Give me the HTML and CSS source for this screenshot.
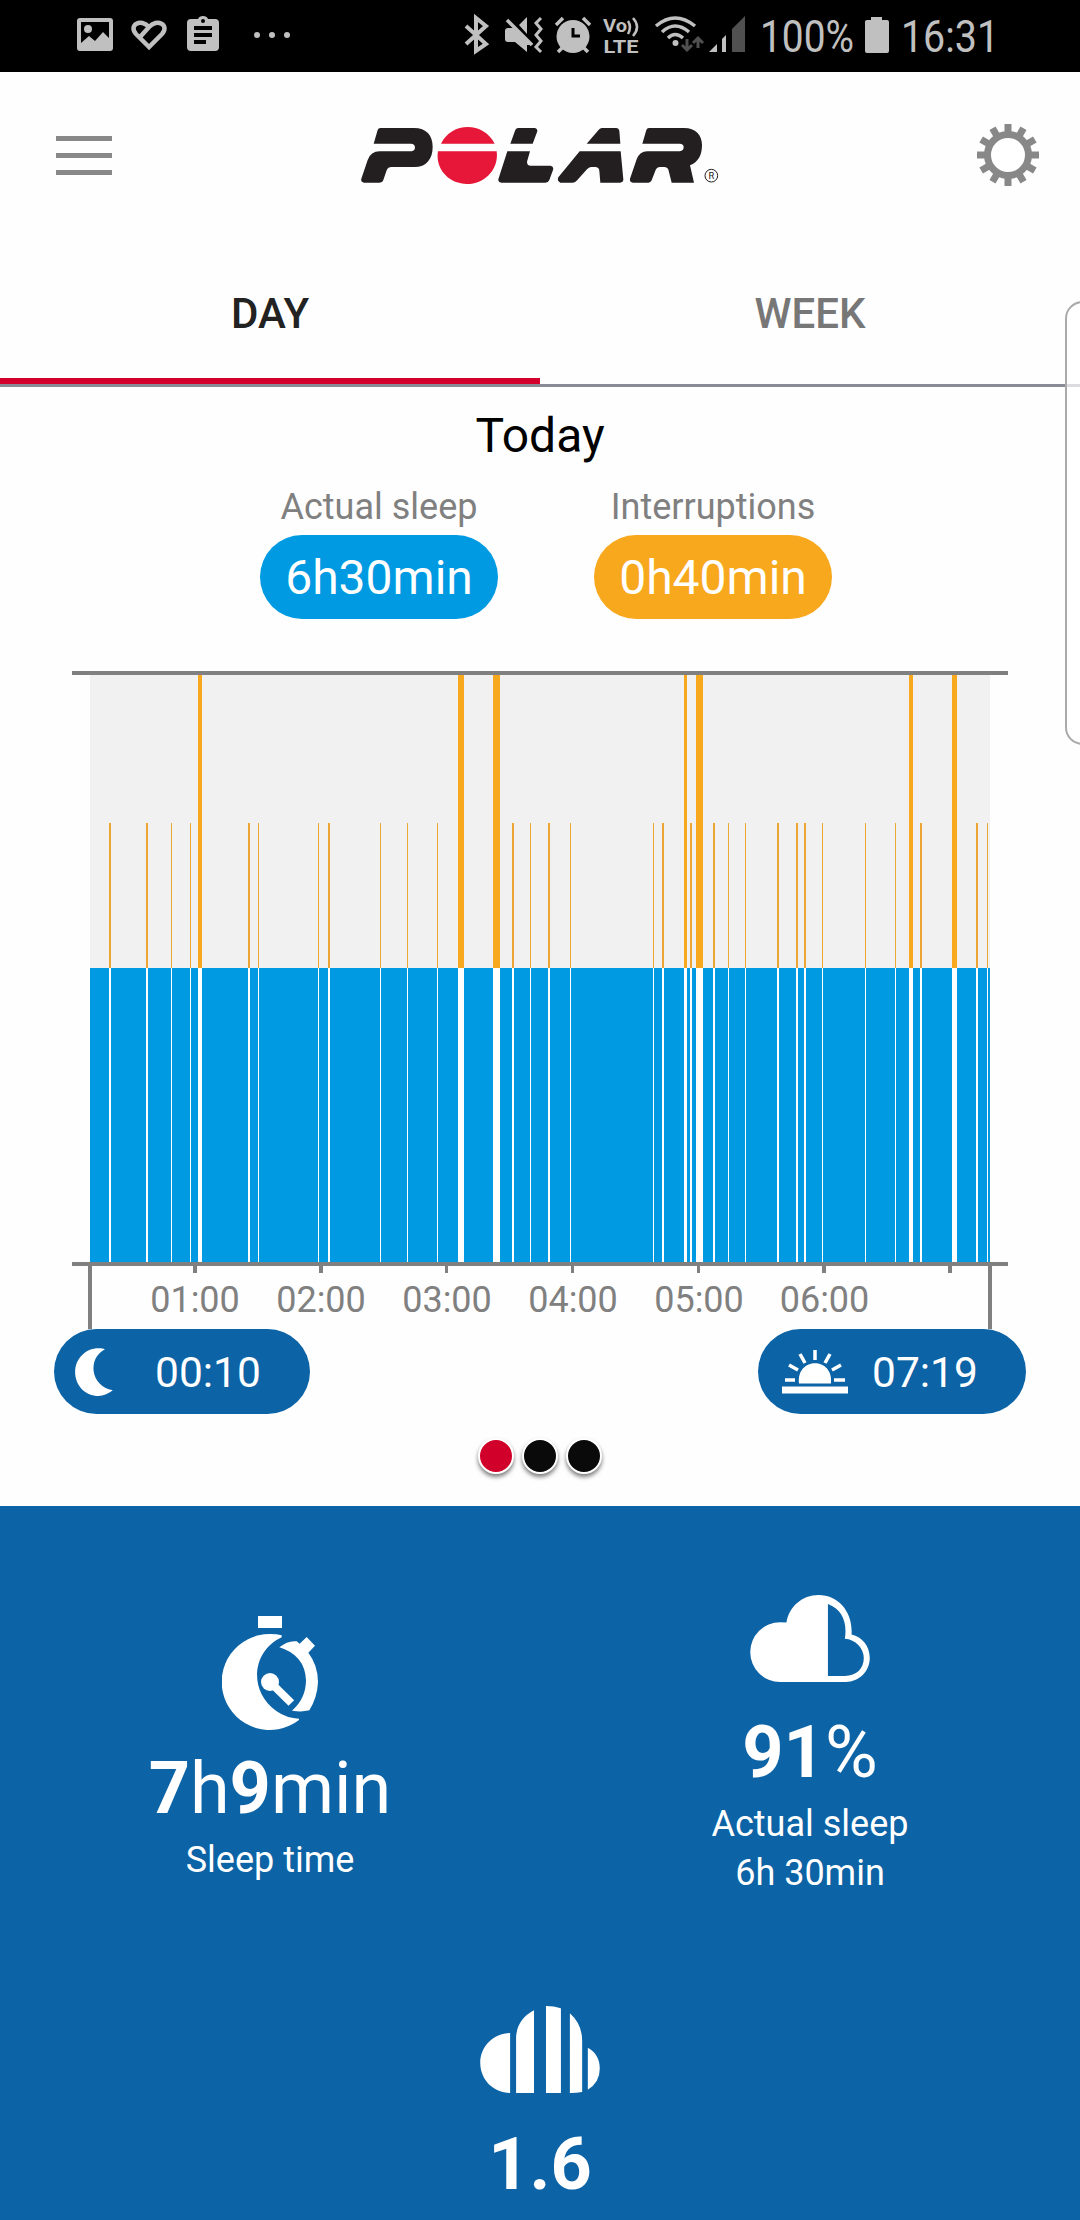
FILE: index.html
```html
<!DOCTYPE html>
<html lang="en">
<head>
  <meta charset="UTF-8">
  <meta name="viewport" content="width=device-width, initial-scale=1.0">
  <title>Polar - Sleep</title>
  <link rel="stylesheet" href="styles.css">
</head>
<body>
  <div class="status-bar">
    <svg class="status-left" viewBox="77 0 216 72" width="216" height="72" fill="#c0c0c0">
      <path fill-rule="evenodd" d="M80 18H110Q113 18 113 21V48Q113 51 110 51H80Q77 51 77 48V21Q77 18 80 18ZM81 22V43L89 36L95 41L103 32L109 38V22Z"/>
      <circle cx="88" cy="29" r="4"/>
      <path d="M149 47L136 34C128 25 141 18 149 27C157 18 170 25 162 34ZM150 26L140 37" fill="none" stroke="#c0c0c0" stroke-width="4.500"/>
      <path fill-rule="evenodd" d="M191 19H198C199 15 207 15 208 19H215Q219 19 219 23V47Q219 51 215 51H191Q187 51 187 47V23Q187 19 191 19ZM203 19A2 2 0 1 0 203 23A2 2 0 1 0 203 19ZM194 26V30H212V26ZM194 33V37H212V33ZM194 40V44H206V40Z"/>
      <circle cx="257" cy="35" r="3"/>
      <circle cx="272" cy="35" r="3"/>
      <circle cx="287" cy="35" r="3"/>
    </svg>
    <svg class="status-right" viewBox="464 0 540 72" width="540" height="72" fill="#c0c0c0">
      <!-- bluetooth -->
      <path d="M466 26L486 44L476 51V18L486 26L466 44" fill="none" stroke="#c0c0c0" stroke-width="4"/>
      <!-- muted / vibrate -->
      <path d="M508 28H513L533 45L527 45V52L515 42H508Q505 42 505 39V31Q505 28 508 28ZM519 25L527 17V34Z"/>
      <path d="M507 20L532 45" fill="none" stroke="#c0c0c0" stroke-width="3.5"/>
      <path d="M541 18L536 23L541 29L536 35L541 41L536 47L541 52" fill="none" stroke="#c0c0c0" stroke-width="3"/>
      <!-- alarm -->
      <circle cx="573" cy="36.500" r="16.500"/>
      <path d="M556 25L563 18M590 25L583 18M562 48L558 52M584 48L588 52" stroke="#c0c0c0" stroke-width="3.500"/>
      <path d="M573 28V36H580" fill="none" stroke="#000" stroke-width="3"/>
      <!-- volte -->
      <text class="volte" x="603" y="32" textLength="24" lengthAdjust="spacingAndGlyphs">Vo</text>
      <text class="volte" x="603.500" y="52.500" textLength="35" lengthAdjust="spacingAndGlyphs">LTE</text>
      <path d="M628 21Q632 27 628 34M633 18Q641 27 633 36" fill="none" stroke="#c0c0c0" stroke-width="2.500"/>
      <!-- wifi -->
      <circle cx="675.500" cy="43" r="3"/>
      <path d="M656 26Q675 10 695 26M662 32Q675 20 689 32M668 38Q675 31 683 38" fill="none" stroke="#c0c0c0" stroke-width="3.500"/>
      <path d="M687 39V50M682 45L687 50L692 45M698 48V37M693 43L698 38L703 43" fill="none" stroke="#505050" stroke-width="3"/>
      <!-- signal -->
      <path d="M709 52L717 44V52ZM722 39L726 35V52H722Z"/>
      <path d="M732 29L745 16V52H732Z" fill="#505050"/>
      <text class="status-text" x="760" y="52" textLength="94" lengthAdjust="spacingAndGlyphs">100%</text>
      <path d="M871 20V17H882V20H887Q889 20 889 22V51Q889 53 887 53H867Q865 53 865 51V22Q865 20 867 20Z"/>
      <text class="status-text" x="901" y="52" textLength="98" lengthAdjust="spacingAndGlyphs">16:31</text>
    </svg>
  </div>

  <header class="header">
    <div class="menu-icon">
      <span></span>
      <span></span>
      <span></span>
    </div>
    <svg class="logo" viewBox="66 78 1074 174" width="358" height="58" fill="#231f20">
      <path d="M124 84H225C262 84 281 106 281 140C281 177 262 201 226 201H158Q147 201 143 211L133 240Q130 248 120 248H75Q64 246 67 236L86 180Q95 154 122 154H218Q228 152 228 142Q227 131 216 131H104L116 90Q118 84 124 84Z"/>
      <path d="M306 131C338 64 434 64 467 131ZM297 154H473C480 205 440 252 384 252C328 252 288 205 297 154Z" fill="#e61738"/>
      <path d="M537 84H588Q596 86 595 94L581 131H514L528 92Q530 84 537 84ZM505 154H573L564 185Q564 197 575 197H635Q645 199 642 210L631 240Q628 248 619 248H487Q477 247 478 238Z"/>
      <path d="M788 84H832Q840 85 841 92L844 131H743L778 91Q782 85 788 84ZM722 154H845L853 238Q853 248 843 248H784L781 212Q780 201 768 201H757Q751 201 744 208L713 242Q708 248 700 248H664Q653 243 658 232Z"/>
      <path d="M930 84H1035C1070 84 1089 105 1089 135C1089 165 1078 186 1053 196L1065 248H998L989 212Q987 201 975 201H963Q953 201 949 212L938 241Q935 248 928 248H882Q871 246 873 236L893 178Q902 154 925 154H1022Q1034 152 1034 142Q1034 131 1022 131H910L922 90Q924 84 930 84Z"/>
      <circle cx="1117" cy="227" r="19" fill="none" stroke="#231f20" stroke-width="3"/>
      <text class="logo-mark" x="1117" y="237">R</text>
    </svg>
    <svg class="gear-icon" viewBox="-31 -31 62 62" width="62" height="62">
      <g stroke="#888" stroke-width="7">
        <path d="M0-31V31"/>
        <path d="M0-31V31" transform="rotate(30)"/>
        <path d="M0-31V31" transform="rotate(60)"/>
        <path d="M0-31V31" transform="rotate(90)"/>
        <path d="M0-31V31" transform="rotate(120)"/>
        <path d="M0-31V31" transform="rotate(150)"/>
      </g>
      <circle r="20.500" fill="#fff" stroke="#888" stroke-width="7"/>
    </svg>
  </header>

  <nav class="tabs">
    <div class="tab active">DAY</div>
    <div class="tab">WEEK</div>
  </nav>
  <div class="edge-panel"></div>

  <main class="day">
    <h1 class="day-title">Today</h1>
    <div class="summary">
      <div class="summary-item">
        <span class="summary-label">Actual sleep</span>
        <span class="pill sleep">6h30min</span>
      </div>
      <div class="summary-item">
        <span class="summary-label">Interruptions</span>
        <span class="pill interruptions">0h40min</span>
      </div>
    </div>

    <svg class="chart" viewBox="72 671 936 658" width="936" height="658" shape-rendering="crispEdges">
      <rect x="90" y="675" width="900" height="293" fill="#f1f1f1"/>
      <rect x="90" y="968" width="900" height="294" fill="#009ae2"/>
      <g id="bars"></g>
      <path fill="#808080" d="M72 671H1008V675H72ZM72 1262H1008V1266H72ZM88 1266H92V1329H88ZM988 1266H992V1329H988Z"/>
      <path fill="#808080" d="M193 1266h4v7h-4zM319 1266h4v7h-4zM445 1266h3v7h-3zM571 1266h3v7h-3zM697 1266h3v7h-3zM822 1266h4v7h-4zM948 1266h4v7h-4z"/>
      <g class="axis-labels">
        <text x="195" y="1312">01:00</text>
        <text x="321" y="1312">02:00</text>
        <text x="447" y="1312">03:00</text>
        <text x="573" y="1312">04:00</text>
        <text x="699" y="1312">05:00</text>
        <text x="824.500" y="1312">06:00</text>
      </g>
    </svg>

    <div class="times">
      <div class="time-pill start">
        <svg viewBox="105 323 114 145" width="38" height="48" fill="#fff">
          <path d="M195 327C142 354 150 438 219 451C203 463 190 468 176 468C136 468 105 436 105 396C105 356 136 324 176 324C184 324 190 325 195 327Z"/>
        </svg>
        <span>00:10</span>
      </div>
      <div class="time-pill end">
        <svg viewBox="782 1351 66 44" width="66" height="44" fill="#fff">
          <path d="M782 1387.500H848V1394.500H782ZM799 1384.500C796 1357.500 834 1357.500 831 1384.500Z"/>
          <path d="M785 1381H795M834 1381H845M789 1366L798 1371M841 1366L832 1371M800 1355L805 1364M830 1355L825 1364M815 1351V1361" stroke="#fff" stroke-width="3.500"/>
        </svg>
        <span>07:19</span>
      </div>
    </div>

    <div class="dots">
      <span class="dot active"></span>
      <span class="dot"></span>
      <span class="dot"></span>
    </div>
  </main>

  <section class="stats">
    <div class="stat sleep-time">
      <svg viewBox="276 78 288 342" width="96" height="114" fill="#fff">
        <path d="M384 78H456V114H384Z"/>
        <path d="M455 136V142C370 180 350 300 440 364Q472 386 507 386V390A144 144 0 1 1 420 132Q440 132 455 136Z"/>
        <path d="M448 172Q475 150 500 154L509 161L530 141L555 167L535 188Q564 226 564 276Q562 322 538 361Q515 367 486 362Q528 325 528 270Q524 195 448 172Z"/>
        <circle cx="420" cy="276" r="27"/>
        <path d="M420 276L484 339" stroke="#fff" stroke-width="24"/>
      </svg>
      <div class="stat-value"><b>7</b>h<b>9</b>min</div>
      <div class="stat-label">Sleep time</div>
    </div>
    <div class="stat actual-sleep">
      <svg viewBox="180 74 360 262" width="120" height="87" fill="#fff">
        <path fill-rule="evenodd" d="M270 336A90 90 0 0 1 270 156Q280 156 289 157C296 110 336 74 386 74C446 74 490 126 485 193C518 200 540 229 540 264C540 304 508 336 468 336ZM414 101V318H465C500 318 522 296 522 264C522 234 497 208 465 206C473 155 456 117 414 101Z"/>
      </svg>
      <div class="stat-value"><b>91</b>%</div>
      <div class="stat-label">Actual sleep<br>6h 30min</div>
    </div>
    <div class="stat continuity">
      <svg viewBox="90 80 360 262" width="120" height="87" fill="#fff">
        <path d="M180 161V342C130 342 90 302 90 251C90 202 130 161 180 161ZM198 342V175Q200 120 252 93V342ZM288 80Q312 80 333 87V342H288ZM360 102Q397 135 397 185V339Q380 342 360 342ZM414 206Q450 226 450 269Q450 310 414 332Z"/>
      </svg>
      <div class="stat-value"><b>1.6</b></div>
    </div>
  </section>

  <script>
    // Interruptions: [x, width], long ones take the full height
    const shortBars = [
      [109, 2], [146, 2], [171, 1], [190, 1], [248, 2], [258, 1], [318, 1], [328, 2],
      [380, 1], [407, 1], [437, 1], [512, 2], [530, 1], [548, 2], [570, 1], [653, 1],
      [662, 2], [690, 2], [713, 2], [728, 1], [745, 1], [777, 2], [796, 2], [804, 2],
      [822, 1], [865, 1], [895, 1], [920, 2], [976, 2], [987, 1]
    ];
    const longBars = [[198, 4], [458, 6], [493, 7], [684, 3], [696, 7], [909, 4], [952, 5]];
    const bars = document.getElementById('bars');

    function addRect(x, y, width, height, fill) {
      const rect = document.createElementNS('http://www.w3.org/2000/svg', 'rect');
      rect.setAttribute('x', x);
      rect.setAttribute('y', y);
      rect.setAttribute('width', width);
      rect.setAttribute('height', height);
      rect.setAttribute('fill', fill);
      bars.appendChild(rect);
    }

    function drawBars(list, top, color) {
      list.forEach(([x, width]) => {
        addRect(x, top, width, 968 - top, color);
        addRect(x, 968, width, 294, '#ffffff');
      });
    }

    drawBars(shortBars, 823, '#eba633');
    drawBars(longBars, 675, '#f8a81c');
  </script>
</body>
</html>
```

FILE: styles.css
```css
* {
  box-sizing: border-box;
}

body {
  width: 1080px;
  height: 2220px;
  margin: 0;
  position: relative;
  overflow: hidden;
  background-color: #fefefe;
  color: #000;
  font-family: Roboto, sans-serif;
}

svg {
  display: block;
  flex-shrink: 0;
}

.status-bar {
  height: 72px;
  padding: 0 76px 0 77px;
  background-color: #000;
  display: flex;
  justify-content: space-between;
}

.status-text {
  font-size: 45px;
}

.volte {
  font-size: 19px;
  font-weight: 700;
}

.header {
  height: 166px;
  padding: 0 41px 0 56px;
  display: flex;
  align-items: center;
  justify-content: space-between;
}

.menu-icon {
  width: 56px;
  height: 39px;
  display: flex;
  flex-direction: column;
  justify-content: space-between;
}

.menu-icon span {
  height: 5px;
  background-color: #888;
}

.logo {
  margin-left: -9px;
}

.logo-mark {
  font-size: 28px;
  text-anchor: middle;
}

.tabs {
  height: 149px;
  display: flex;
  border-bottom: 3px solid #8a8a94;
}

.tab {
  flex: 1;
  padding-top: 52px;
  line-height: 48px;
  font-size: 42px;
  font-weight: 500;
  text-align: center;
  color: #777;
}

.tab.active {
  color: #222;
  border-bottom: 6px solid #d3002b;
}

/* handle of the phone's edge panel, over the page */
.edge-panel {
  position: absolute;
  top: 301px;
  right: -20px;
  width: 35px;
  height: 444px;
  border: 2px solid #aaa;
  border-radius: 20px;
  background-color: rgba(255, 255, 255, 0.7);
}

.day {
  height: 1119px;
  padding-top: 21px;
  display: flex;
  flex-direction: column;
  align-items: center;
}

.day-title {
  margin: 0;
  font-size: 48px;
  line-height: 56px;
  font-weight: 400;
}

.summary {
  width: 572px;
  margin: 22px 0 52px 12px;
  display: flex;
  justify-content: space-between;
}

.summary-item {
  width: 238px;
  display: flex;
  flex-direction: column;
  text-align: center;
}

.summary-label {
  margin-bottom: 7px;
  font-size: 36px;
  line-height: 42px;
  color: #808080;
}

.pill {
  height: 84px;
  border-radius: 42px;
  font-size: 48px;
  line-height: 86px;
  color: #fff;
}

.pill.sleep {
  background-color: #009ae2;
}

.pill.interruptions {
  background-color: #f8a81c;
}

.axis-labels {
  font-size: 36px;
  fill: #808080;
  text-anchor: middle;
}

.times {
  width: 972px;
  display: flex;
  justify-content: space-between;
}

.time-pill {
  height: 85px;
  border-radius: 43px;
  background-color: #0c63a6;
  color: #fff;
  font-size: 42.5px;
  display: flex;
  align-items: center;
}

.time-pill span {
  padding-top: 2px;
}

.time-pill.start {
  width: 256px;
  padding-left: 21px;
  gap: 42px;
}

.time-pill.end {
  width: 268px;
  padding-left: 24px;
  gap: 24px;
}

.dots {
  margin-top: 24px;
  display: flex;
  gap: 8px;
}

.dot {
  width: 36px;
  height: 36px;
  border: 2px solid #fff;
  border-radius: 50%;
  background-color: #0a0a0a;
  box-shadow: 0 3px 4px rgba(0, 0, 0, 0.5);
}

.dot.active {
  background-color: #d0002a;
}

.stats {
  height: 714px;
  background-color: #0c63a6;
  color: #fff;
  display: grid;
  grid-template-columns: 1fr 1fr;
  grid-template-rows: 500px 214px;
}

.stat {
  display: flex;
  flex-direction: column;
  align-items: center;
  text-align: center;
}

.stat-value {
  font-size: 72px;
  line-height: 84px;
}

.stat-value b {
  font-weight: 700;
}

.stat-label {
  font-size: 36px;
  line-height: 49px;
}

.sleep-time {
  padding-top: 110px;
}

.sleep-time .stat-value {
  margin: 17px 0 5px;
}

.actual-sleep {
  padding-top: 89px;
}

.actual-sleep .stat-value {
  margin: 29px 0 5px;
}

.continuity {
  grid-column: 1 / 3;
}

.continuity .stat-value {
  margin-top: 30px;
}
```
